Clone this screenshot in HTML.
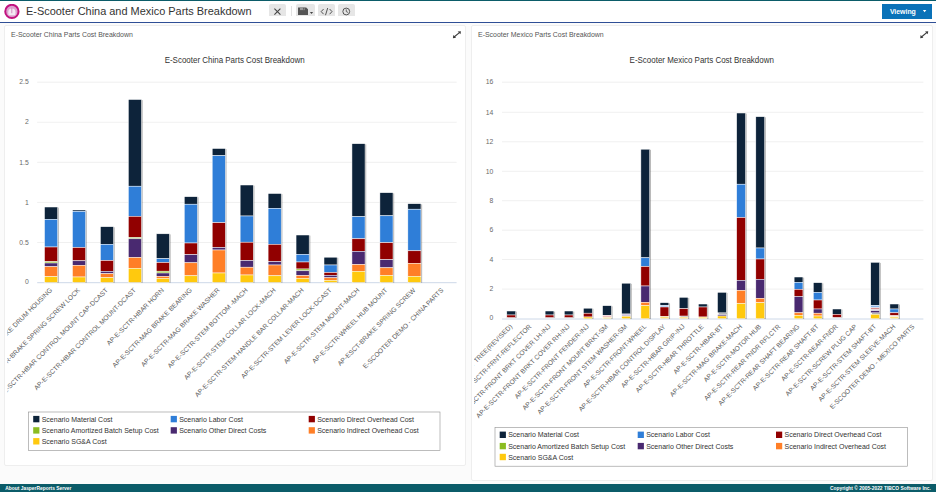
<!DOCTYPE html>
<html lang="en"><head><meta charset="utf-8"><title>E-Scooter China and Mexico Parts Breakdown</title>
<style>
html,body{margin:0;padding:0}
body{width:936px;height:492px;overflow:hidden;position:relative;background:#fbfbfb;font-family:"Liberation Sans", sans-serif;}
.abs{position:absolute}
#topstrip{left:0;top:0;width:936px;height:1px;background:#0b5c69}
#header{left:0;top:1px;width:936px;height:21px;background:#fff}
#hline{left:0;top:21.6px;width:936px;height:1.1px;background:#2f4f96}
#title{left:26px;top:6.4px;font-size:10.95px;letter-spacing:0px;color:#333;white-space:nowrap;line-height:1}
.btn{top:3.5px;height:12.5px;background:#e6e6e6;border-radius:2px 2px 0 0}
#viewing{left:881.5px;top:4.1px;width:50.6px;height:14.9px;background:#0a72b8}
#viewing span{position:absolute;left:8.4px;top:5.0px;font-size:6.9px;letter-spacing:0px;font-weight:bold;color:#fff;line-height:1}
.panel{background:#fff;border:1px solid #eeeeee;border-radius:2px;box-sizing:border-box}
.ptitle{font-size:6.95px;letter-spacing:0px;color:#555;white-space:nowrap;line-height:1;top:32.4px}
#footer{left:0;top:483.7px;width:936px;height:8.3px;background:#0b5c69;color:#fff;font-weight:bold;font-size:4.88px;line-height:1}
#footer span{position:absolute;top:3.0px;white-space:nowrap}
svg text{font-family:"Liberation Sans", sans-serif}
</style></head><body>
<div id="topstrip" class="abs"></div>
<div id="header" class="abs"></div>
<div id="hline" class="abs"></div>
<svg class="abs" style="left:4px;top:4px" width="16" height="16" viewBox="0 0 16 16">
<circle cx="7.9" cy="7.45" r="6.65" fill="#dda2cf" stroke="#c2127f" stroke-width="2"/>
<path d="M4.5 11.3 L4.3 8.2 A3.6 3.6 0 0 1 11.5 8.2 L11.3 11.3 Z" fill="#f3e9f3"/>
<line x1="7.8" y1="9.2" x2="7.8" y2="3.6" stroke="#d781c0" stroke-width="0.9"/>
</svg>
<div id="title" class="abs">E-Scooter China and Mexico Parts Breakdown</div>
<div class="abs btn" style="left:268.8px;width:17.2px"></div>
<div class="abs" style="left:290.6px;top:6px;width:1px;height:10px;background:#e2e2e2"></div>
<div class="abs btn" style="left:296px;width:19.2px"></div>
<div class="abs btn" style="left:317.9px;width:17.1px"></div>
<div class="abs btn" style="left:337.5px;width:17.2px"></div>
<svg class="abs" style="left:260px;top:0" width="100" height="22" viewBox="0 0 100 22">
<g stroke="#444" stroke-width="1.1" fill="none">
<path d="M14.4 8.6 L20.4 14.6 M20.4 8.6 L14.4 14.6"/>
<path d="M63.6 9 L61.2 11.6 L63.6 14.2 M69.6 9 L72 11.6 L69.6 14.2 M67.7 8 L65.5 15.2" stroke-width="0.9"/>
<circle cx="86.25" cy="11.5" r="3.4" stroke-width="0.9"/>
<path d="M86.25 9.4 L86.25 11.6 L88 12.4" stroke-width="0.8"/>
</g>
<path d="M38 7.5 H46.2 L48 9.2 V15 H38 Z" fill="#555"/>
<rect x="40" y="7.5" width="5" height="2.6" fill="#9a9a9a"/>
<rect x="43.2" y="7.9" width="1.2" height="1.8" fill="#555"/>
<path d="M49.9 12.1 H53.1 L51.5 14 Z" fill="#444"/>
</svg>
<div id="viewing" class="abs"><span>Viewing</span>
<svg class="abs" style="left:40px;top:5.4px" width="6" height="5" viewBox="0 0 6 5"><path d="M0.9 1 H4.3 L2.6 3.2 Z" fill="#fff"/></svg></div>
<div class="abs panel" style="left:4px;top:24.9px;width:462px;height:441.1px"></div>
<div class="abs panel" style="left:471.3px;top:24.9px;width:461.4px;height:456.6px"></div>
<div class="abs ptitle" style="left:11px">E-Scooter China Parts Cost Breakdown</div>
<div class="abs ptitle" style="left:478px">E-Scooter Mexico Parts Cost Breakdown</div>
<svg class="abs" style="left:0;top:0" width="936" height="492" viewBox="0 0 936 492">
<defs><filter id="blur" x="-50%" y="-5%" width="200%" height="110%"><feGaussianBlur stdDeviation="0.7"/></filter><clipPath id="cl"><rect x="7.3" y="40" width="460" height="425"/></clipPath><clipPath id="cr"><rect x="474" y="40" width="460" height="440"/></clipPath></defs><line x1="37.2" x2="456.6" y1="242.52" y2="242.52" stroke="#e9e9e9" stroke-width="0.7"/><line x1="37.2" x2="456.6" y1="202.44" y2="202.44" stroke="#e9e9e9" stroke-width="0.7"/><line x1="37.2" x2="456.6" y1="162.36" y2="162.36" stroke="#e9e9e9" stroke-width="0.7"/><line x1="37.2" x2="456.6" y1="122.28" y2="122.28" stroke="#e9e9e9" stroke-width="0.7"/><line x1="37.2" x2="456.6" y1="82.20" y2="82.20" stroke="#e9e9e9" stroke-width="0.7"/><line x1="37.2" x2="456.6" y1="282.7" y2="282.7" stroke="#cdd8e8" stroke-width="1"/><g fill="#000" opacity="0.3" filter="url(#blur)"><rect x="45.70" y="207.60" width="13.10" height="75.10"/><rect x="73.65" y="210.60" width="13.10" height="72.10"/><rect x="101.60" y="227.30" width="13.10" height="55.40"/><rect x="129.55" y="100.10" width="13.10" height="182.60"/><rect x="157.50" y="234.40" width="13.10" height="48.30"/><rect x="185.45" y="197.30" width="13.10" height="85.40"/><rect x="213.40" y="149.10" width="13.10" height="133.60"/><rect x="241.35" y="185.60" width="13.10" height="97.10"/><rect x="269.30" y="194.10" width="13.10" height="88.60"/><rect x="297.25" y="235.60" width="13.10" height="47.10"/><rect x="325.20" y="257.80" width="13.10" height="24.90"/><rect x="353.15" y="144.30" width="13.10" height="138.40"/><rect x="381.10" y="193.30" width="13.10" height="89.40"/><rect x="409.05" y="204.30" width="13.10" height="78.40"/></g><g stroke="#fff" stroke-width="0.5"><rect x="44.50" y="207.00" width="13.10" height="12.30" fill="#0d233a"/><rect x="44.50" y="219.30" width="13.10" height="27.70" fill="#2f7ed8"/><rect x="44.50" y="247.00" width="13.10" height="14.70" fill="#910000"/><rect x="44.50" y="261.70" width="13.10" height="1.30" fill="#8bbc21"/><rect x="44.50" y="263.00" width="13.10" height="3.70" fill="#492970"/><rect x="44.50" y="266.70" width="13.10" height="10.00" fill="#ff7f27"/><rect x="44.50" y="276.70" width="13.10" height="5.70" fill="#ffc90e"/><rect x="72.45" y="210.00" width="13.10" height="1.30" fill="#0d233a"/><rect x="72.45" y="211.30" width="13.10" height="36.20" fill="#2f7ed8"/><rect x="72.45" y="247.50" width="13.10" height="13.30" fill="#910000"/><rect x="72.45" y="260.80" width="13.10" height="4.50" fill="#492970"/><rect x="72.45" y="265.30" width="13.10" height="11.70" fill="#ff7f27"/><rect x="72.45" y="277.00" width="13.10" height="5.40" fill="#ffc90e"/><rect x="100.40" y="226.70" width="13.10" height="17.60" fill="#0d233a"/><rect x="100.40" y="244.30" width="13.10" height="16.20" fill="#2f7ed8"/><rect x="100.40" y="260.50" width="13.10" height="10.80" fill="#910000"/><rect x="100.40" y="271.30" width="13.10" height="2.40" fill="#492970"/><rect x="100.40" y="273.70" width="13.10" height="4.00" fill="#ff7f27"/><rect x="100.40" y="277.70" width="13.10" height="4.70" fill="#ffc90e"/><rect x="128.35" y="99.50" width="13.10" height="86.70" fill="#0d233a"/><rect x="128.35" y="186.20" width="13.10" height="30.10" fill="#2f7ed8"/><rect x="128.35" y="216.30" width="13.10" height="21.20" fill="#910000"/><rect x="128.35" y="237.50" width="13.10" height="1.30" fill="#8bbc21"/><rect x="128.35" y="238.80" width="13.10" height="18.70" fill="#492970"/><rect x="128.35" y="257.50" width="13.10" height="10.80" fill="#ff7f27"/><rect x="128.35" y="268.30" width="13.10" height="14.10" fill="#ffc90e"/><rect x="156.30" y="233.80" width="13.10" height="24.90" fill="#0d233a"/><rect x="156.30" y="258.70" width="13.10" height="3.80" fill="#2f7ed8"/><rect x="156.30" y="262.50" width="13.10" height="8.70" fill="#910000"/><rect x="156.30" y="271.20" width="13.10" height="1.80" fill="#8bbc21"/><rect x="156.30" y="273.00" width="13.10" height="3.30" fill="#492970"/><rect x="156.30" y="276.30" width="13.10" height="2.00" fill="#ff7f27"/><rect x="156.30" y="278.30" width="13.10" height="4.10" fill="#ffc90e"/><rect x="184.25" y="196.70" width="13.10" height="7.50" fill="#0d233a"/><rect x="184.25" y="204.20" width="13.10" height="38.80" fill="#2f7ed8"/><rect x="184.25" y="243.00" width="13.10" height="11.70" fill="#910000"/><rect x="184.25" y="254.70" width="13.10" height="8.10" fill="#492970"/><rect x="184.25" y="262.80" width="13.10" height="13.00" fill="#ff7f27"/><rect x="184.25" y="275.80" width="13.10" height="6.60" fill="#ffc90e"/><rect x="212.20" y="148.50" width="13.10" height="7.20" fill="#0d233a"/><rect x="212.20" y="155.70" width="13.10" height="67.00" fill="#2f7ed8"/><rect x="212.20" y="222.70" width="13.10" height="24.80" fill="#910000"/><rect x="212.20" y="247.50" width="13.10" height="2.50" fill="#492970"/><rect x="212.20" y="250.00" width="13.10" height="23.00" fill="#ff7f27"/><rect x="212.20" y="273.00" width="13.10" height="9.40" fill="#ffc90e"/><rect x="240.15" y="185.00" width="13.10" height="31.00" fill="#0d233a"/><rect x="240.15" y="216.00" width="13.10" height="26.20" fill="#2f7ed8"/><rect x="240.15" y="242.20" width="13.10" height="18.30" fill="#910000"/><rect x="240.15" y="260.50" width="13.10" height="6.70" fill="#492970"/><rect x="240.15" y="267.20" width="13.10" height="7.80" fill="#ff7f27"/><rect x="240.15" y="275.00" width="13.10" height="7.40" fill="#ffc90e"/><rect x="268.10" y="193.50" width="13.10" height="14.80" fill="#0d233a"/><rect x="268.10" y="208.30" width="13.10" height="36.00" fill="#2f7ed8"/><rect x="268.10" y="244.30" width="13.10" height="17.40" fill="#910000"/><rect x="268.10" y="261.70" width="13.10" height="3.30" fill="#492970"/><rect x="268.10" y="265.00" width="13.10" height="10.80" fill="#ff7f27"/><rect x="268.10" y="275.80" width="13.10" height="6.60" fill="#ffc90e"/><rect x="296.05" y="235.00" width="13.10" height="19.30" fill="#0d233a"/><rect x="296.05" y="254.30" width="13.10" height="7.70" fill="#2f7ed8"/><rect x="296.05" y="262.00" width="13.10" height="7.00" fill="#910000"/><rect x="296.05" y="269.00" width="13.10" height="1.80" fill="#8bbc21"/><rect x="296.05" y="270.80" width="13.10" height="4.70" fill="#492970"/><rect x="296.05" y="275.50" width="13.10" height="2.80" fill="#ff7f27"/><rect x="296.05" y="278.30" width="13.10" height="4.10" fill="#ffc90e"/><rect x="324.00" y="257.20" width="13.10" height="7.80" fill="#0d233a"/><rect x="324.00" y="265.00" width="13.10" height="7.50" fill="#2f7ed8"/><rect x="324.00" y="272.50" width="13.10" height="2.80" fill="#910000"/><rect x="324.00" y="275.30" width="13.10" height="2.50" fill="#492970"/><rect x="324.00" y="277.80" width="13.10" height="2.50" fill="#ff7f27"/><rect x="324.00" y="280.30" width="13.10" height="2.10" fill="#ffc90e"/><rect x="351.95" y="143.70" width="13.10" height="73.00" fill="#0d233a"/><rect x="351.95" y="216.70" width="13.10" height="22.10" fill="#2f7ed8"/><rect x="351.95" y="238.80" width="13.10" height="12.50" fill="#910000"/><rect x="351.95" y="251.30" width="13.10" height="13.20" fill="#492970"/><rect x="351.95" y="264.50" width="13.10" height="6.80" fill="#ff7f27"/><rect x="351.95" y="271.30" width="13.10" height="11.10" fill="#ffc90e"/><rect x="379.90" y="192.70" width="13.10" height="23.10" fill="#0d233a"/><rect x="379.90" y="215.80" width="13.10" height="26.90" fill="#2f7ed8"/><rect x="379.90" y="242.70" width="13.10" height="17.00" fill="#910000"/><rect x="379.90" y="259.70" width="13.10" height="8.10" fill="#492970"/><rect x="379.90" y="267.80" width="13.10" height="7.70" fill="#ff7f27"/><rect x="379.90" y="275.50" width="13.10" height="6.90" fill="#ffc90e"/><rect x="407.85" y="203.70" width="13.10" height="5.50" fill="#0d233a"/><rect x="407.85" y="209.20" width="13.10" height="41.60" fill="#2f7ed8"/><rect x="407.85" y="250.80" width="13.10" height="12.50" fill="#910000"/><rect x="407.85" y="263.30" width="13.10" height="13.00" fill="#ff7f27"/><rect x="407.85" y="276.30" width="13.10" height="6.10" fill="#ffc90e"/></g><text x="28.8" y="283.60" text-anchor="end" font-size="6.8" fill="#6a6a6a">0</text><text x="28.8" y="244.72" text-anchor="end" font-size="6.8" fill="#6a6a6a">0.5</text><text x="28.8" y="204.64" text-anchor="end" font-size="6.8" fill="#6a6a6a">1</text><text x="28.8" y="164.56" text-anchor="end" font-size="6.8" fill="#6a6a6a">1.5</text><text x="28.8" y="124.48" text-anchor="end" font-size="6.8" fill="#6a6a6a">2</text><text x="28.8" y="84.40" text-anchor="end" font-size="6.8" fill="#6a6a6a">2.5</text><g clip-path="url(#cl)"><text transform="translate(52.55 290.70) rotate(-45)" text-anchor="end" font-size="6.65" letter-spacing="0" fill="#5c5c5c">AP-E-SCTR-BRAKE DRUM HOUSING</text><text transform="translate(80.50 290.70) rotate(-45)" text-anchor="end" font-size="6.65" letter-spacing="0" fill="#5c5c5c">AP-E-SCTR-BRAKE SPRING SCREW LOCK</text><text transform="translate(108.45 290.70) rotate(-45)" text-anchor="end" font-size="6.65" letter-spacing="0" fill="#5c5c5c">AP-E-SCTR-HBAR CONTROL MOUNT CAP-DCAST</text><text transform="translate(136.40 290.70) rotate(-45)" text-anchor="end" font-size="6.65" letter-spacing="0" fill="#5c5c5c">AP-E-SCTR-HBAR CONTROL MOUNT-DCAST</text><text transform="translate(164.35 290.70) rotate(-45)" text-anchor="end" font-size="6.65" letter-spacing="0" fill="#5c5c5c">AP-E-SCTR-HBAR HORN</text><text transform="translate(192.30 290.70) rotate(-45)" text-anchor="end" font-size="6.65" letter-spacing="0" fill="#5c5c5c">AP-E-SCTR-MAG BRAKE BEARING</text><text transform="translate(220.25 290.70) rotate(-45)" text-anchor="end" font-size="6.65" letter-spacing="0" fill="#5c5c5c">AP-E-SCTR-MAG BRAKE WASHER</text><text transform="translate(248.20 290.70) rotate(-45)" text-anchor="end" font-size="6.65" letter-spacing="0" fill="#5c5c5c">AP-E-SCTR-STEM BOTTOM -MACH</text><text transform="translate(276.15 290.70) rotate(-45)" text-anchor="end" font-size="6.65" letter-spacing="0" fill="#5c5c5c">AP-E-SCTR-STEM COLLAR LOCK-MACH</text><text transform="translate(304.10 290.70) rotate(-45)" text-anchor="end" font-size="6.65" letter-spacing="0" fill="#5c5c5c">AP-E-SCTR-STEM HANDLE BAR COLLAR-MACH</text><text transform="translate(332.05 290.70) rotate(-45)" text-anchor="end" font-size="6.65" letter-spacing="0" fill="#5c5c5c">AP-E-SCTR-STEM LEVER LOCK-DCAST</text><text transform="translate(360.00 290.70) rotate(-45)" text-anchor="end" font-size="6.65" letter-spacing="0" fill="#5c5c5c">AP-E-SCTR-STEM MOUNT-MACH</text><text transform="translate(387.95 290.70) rotate(-45)" text-anchor="end" font-size="6.65" letter-spacing="0" fill="#5c5c5c">AP-E-SCTR-WHEEL HUB MOUNT</text><text transform="translate(415.90 290.70) rotate(-45)" text-anchor="end" font-size="6.65" letter-spacing="0" fill="#5c5c5c">AP-ESCT-BRAKE SPRING SCREW</text><text transform="translate(443.85 290.70) rotate(-45)" text-anchor="end" font-size="6.65" letter-spacing="0" fill="#5c5c5c">E-SCOOTER DEMO - CHINA PARTS</text></g><text transform="translate(234.6 63.2) scale(0.9280 1)" text-anchor="middle" font-size="8.6" fill="#333">E-Scooter China Parts Cost Breakdown</text><rect x="28.5" y="412" width="411.5" height="38.5" fill="#fff" stroke="#909090" stroke-width="0.6"/><rect x="33.2" y="415.90" width="6.2" height="6.4" fill="#0d233a"/><text x="41.7" y="421.70" font-size="7" letter-spacing="0" fill="#333">Scenario Material Cost</text><rect x="170.7" y="415.90" width="6.2" height="6.4" fill="#2f7ed8"/><text x="179.2" y="421.70" font-size="7" letter-spacing="0" fill="#333">Scenario Labor Cost</text><rect x="308.7" y="415.90" width="6.2" height="6.4" fill="#910000"/><text x="317.2" y="421.70" font-size="7" letter-spacing="0" fill="#333">Scenario Direct Overhead Cost</text><rect x="33.2" y="427.20" width="6.2" height="6.4" fill="#8bbc21"/><text x="41.7" y="433.00" font-size="7" letter-spacing="0" fill="#333">Scenario Amortized Batch Setup Cost</text><rect x="170.7" y="427.20" width="6.2" height="6.4" fill="#492970"/><text x="179.2" y="433.00" font-size="7" letter-spacing="0" fill="#333">Scenario Other Direct Costs</text><rect x="308.7" y="427.20" width="6.2" height="6.4" fill="#ff7f27"/><text x="317.2" y="433.00" font-size="7" letter-spacing="0" fill="#333">Scenario Indirect Overhead Cost</text><rect x="33.2" y="438.10" width="6.2" height="6.4" fill="#ffc90e"/><text x="41.7" y="443.90" font-size="7" letter-spacing="0" fill="#333">Scenario SG&amp;A Cost</text><line x1="502" x2="923.4" y1="289.10" y2="289.10" stroke="#e9e9e9" stroke-width="0.7"/><line x1="502" x2="923.4" y1="259.50" y2="259.50" stroke="#e9e9e9" stroke-width="0.7"/><line x1="502" x2="923.4" y1="230.20" y2="230.20" stroke="#e9e9e9" stroke-width="0.7"/><line x1="502" x2="923.4" y1="200.70" y2="200.70" stroke="#e9e9e9" stroke-width="0.7"/><line x1="502" x2="923.4" y1="171.30" y2="171.30" stroke="#e9e9e9" stroke-width="0.7"/><line x1="502" x2="923.4" y1="141.80" y2="141.80" stroke="#e9e9e9" stroke-width="0.7"/><line x1="502" x2="923.4" y1="112.30" y2="112.30" stroke="#e9e9e9" stroke-width="0.7"/><line x1="502" x2="923.4" y1="82.20" y2="82.20" stroke="#e9e9e9" stroke-width="0.7"/><line x1="502" x2="923.4" y1="319.0" y2="319.0" stroke="#cdd8e8" stroke-width="1"/><g fill="#000" opacity="0.3" filter="url(#blur)"><rect x="508.00" y="311.60" width="8.80" height="6.20"/><rect x="546.31" y="311.60" width="8.80" height="6.20"/><rect x="565.47" y="311.60" width="8.80" height="6.20"/><rect x="584.62" y="308.80" width="8.80" height="10.20"/><rect x="603.78" y="306.30" width="8.80" height="12.70"/><rect x="622.93" y="283.80" width="8.80" height="35.20"/><rect x="642.09" y="149.80" width="8.80" height="169.20"/><rect x="661.24" y="303.30" width="8.80" height="15.70"/><rect x="680.40" y="297.90" width="8.80" height="21.10"/><rect x="699.55" y="304.60" width="8.80" height="14.40"/><rect x="718.71" y="292.90" width="8.80" height="26.10"/><rect x="737.86" y="113.60" width="8.80" height="205.40"/><rect x="757.02" y="117.30" width="8.80" height="201.70"/><rect x="795.33" y="277.60" width="8.80" height="41.40"/><rect x="814.48" y="283.30" width="8.80" height="35.70"/><rect x="833.64" y="309.60" width="8.80" height="8.00"/><rect x="871.95" y="262.90" width="8.80" height="56.10"/><rect x="891.10" y="304.60" width="8.80" height="14.40"/></g><g stroke="#fff" stroke-width="0.5"><rect x="506.80" y="311.00" width="8.80" height="4.00" fill="#0d233a"/><rect x="506.80" y="315.00" width="8.80" height="2.50" fill="#910000"/><rect x="545.11" y="311.00" width="8.80" height="4.00" fill="#0d233a"/><rect x="545.11" y="315.00" width="8.80" height="2.50" fill="#910000"/><rect x="564.26" y="311.00" width="8.80" height="4.00" fill="#0d233a"/><rect x="564.26" y="315.00" width="8.80" height="2.50" fill="#910000"/><rect x="583.42" y="308.20" width="8.80" height="5.00" fill="#0d233a"/><rect x="583.42" y="313.20" width="8.80" height="3.80" fill="#910000"/><rect x="583.42" y="317.00" width="8.80" height="1.70" fill="#ffc90e"/><rect x="602.58" y="305.70" width="8.80" height="9.60" fill="#0d233a"/><rect x="602.58" y="315.30" width="8.80" height="2.00" fill="#f3c0c0"/><rect x="602.58" y="317.30" width="8.80" height="1.40" fill="#ffe07a"/><rect x="621.73" y="283.20" width="8.80" height="30.80" fill="#0d233a"/><rect x="621.73" y="314.00" width="8.80" height="2.20" fill="#c9bddb"/><rect x="621.73" y="316.20" width="8.80" height="2.50" fill="#ffc90e"/><rect x="640.88" y="149.20" width="8.80" height="108.60" fill="#0d233a"/><rect x="640.88" y="257.80" width="8.80" height="8.70" fill="#2f7ed8"/><rect x="640.88" y="266.50" width="8.80" height="19.50" fill="#910000"/><rect x="640.88" y="286.00" width="8.80" height="16.30" fill="#492970"/><rect x="640.88" y="302.30" width="8.80" height="3.40" fill="#ff7f27"/><rect x="640.88" y="305.70" width="8.80" height="13.00" fill="#ffc90e"/><rect x="660.04" y="302.70" width="8.80" height="2.60" fill="#0d233a"/><rect x="660.04" y="305.30" width="8.80" height="1.70" fill="#8db7ea"/><rect x="660.04" y="307.00" width="8.80" height="9.50" fill="#910000"/><rect x="660.04" y="316.50" width="8.80" height="2.20" fill="#ffe07a"/><rect x="679.20" y="297.30" width="8.80" height="11.40" fill="#0d233a"/><rect x="679.20" y="308.70" width="8.80" height="7.30" fill="#910000"/><rect x="679.20" y="317.00" width="8.80" height="1.70" fill="#ffe07a"/><rect x="698.35" y="304.00" width="8.80" height="3.00" fill="#0d233a"/><rect x="698.35" y="307.00" width="8.80" height="10.00" fill="#910000"/><rect x="698.35" y="317.00" width="8.80" height="1.70" fill="#ffe07a"/><rect x="717.50" y="292.30" width="8.80" height="20.50" fill="#0d233a"/><rect x="717.50" y="314.70" width="8.80" height="1.30" fill="#492970"/><rect x="717.50" y="316.00" width="8.80" height="2.70" fill="#ffc90e"/><rect x="736.66" y="113.00" width="8.80" height="71.20" fill="#0d233a"/><rect x="736.66" y="184.20" width="8.80" height="33.30" fill="#2f7ed8"/><rect x="736.66" y="217.50" width="8.80" height="62.80" fill="#910000"/><rect x="736.66" y="280.30" width="8.80" height="10.00" fill="#492970"/><rect x="736.66" y="290.30" width="8.80" height="13.20" fill="#ff7f27"/><rect x="736.66" y="303.50" width="8.80" height="15.20" fill="#ffc90e"/><rect x="755.82" y="116.70" width="8.80" height="131.30" fill="#0d233a"/><rect x="755.82" y="248.00" width="8.80" height="11.00" fill="#2f7ed8"/><rect x="755.82" y="259.00" width="8.80" height="20.30" fill="#910000"/><rect x="755.82" y="279.30" width="8.80" height="19.00" fill="#492970"/><rect x="755.82" y="298.30" width="8.80" height="4.40" fill="#ff7f27"/><rect x="755.82" y="302.70" width="8.80" height="16.00" fill="#ffc90e"/><rect x="794.13" y="277.00" width="8.80" height="5.30" fill="#0d233a"/><rect x="794.13" y="282.30" width="8.80" height="7.00" fill="#2f7ed8"/><rect x="794.13" y="289.30" width="8.80" height="7.20" fill="#910000"/><rect x="794.13" y="296.50" width="8.80" height="16.30" fill="#492970"/><rect x="794.13" y="312.80" width="8.80" height="2.50" fill="#ff7f27"/><rect x="794.13" y="315.30" width="8.80" height="3.40" fill="#ffc90e"/><rect x="813.28" y="282.70" width="8.80" height="9.60" fill="#0d233a"/><rect x="813.28" y="292.30" width="8.80" height="7.70" fill="#2f7ed8"/><rect x="813.28" y="300.00" width="8.80" height="9.00" fill="#910000"/><rect x="813.28" y="309.00" width="8.80" height="4.20" fill="#492970"/><rect x="813.28" y="313.20" width="8.80" height="2.80" fill="#ff7f27"/><rect x="813.28" y="316.00" width="8.80" height="2.70" fill="#ffc90e"/><rect x="832.44" y="309.00" width="8.80" height="5.30" fill="#0d233a"/><rect x="832.44" y="314.30" width="8.80" height="3.00" fill="#910000"/><rect x="870.75" y="262.30" width="8.80" height="43.00" fill="#0d233a"/><rect x="870.75" y="305.30" width="8.80" height="2.50" fill="#8db7ea"/><rect x="870.75" y="307.80" width="8.80" height="2.00" fill="#d98a8a"/><rect x="870.75" y="309.80" width="8.80" height="0.90" fill="#c9bddb"/><rect x="870.75" y="310.70" width="8.80" height="2.10" fill="#492970"/><rect x="870.75" y="314.30" width="8.80" height="4.40" fill="#ffc90e"/><rect x="889.90" y="304.00" width="8.80" height="5.00" fill="#0d233a"/><rect x="889.90" y="309.00" width="8.80" height="3.80" fill="#2f7ed8"/><rect x="889.90" y="312.80" width="8.80" height="2.90" fill="#910000"/><rect x="889.90" y="315.70" width="8.80" height="1.00" fill="#ffc79a"/><rect x="889.90" y="316.70" width="8.80" height="2.00" fill="#ffe07a"/></g><text x="493.4" y="320.10" text-anchor="end" font-size="6.8" fill="#6a6a6a">0</text><text x="493.4" y="291.30" text-anchor="end" font-size="6.8" fill="#6a6a6a">2</text><text x="493.4" y="261.70" text-anchor="end" font-size="6.8" fill="#6a6a6a">4</text><text x="493.4" y="232.40" text-anchor="end" font-size="6.8" fill="#6a6a6a">6</text><text x="493.4" y="202.90" text-anchor="end" font-size="6.8" fill="#6a6a6a">8</text><text x="493.4" y="173.50" text-anchor="end" font-size="6.8" fill="#6a6a6a">10</text><text x="493.4" y="144.00" text-anchor="end" font-size="6.8" fill="#6a6a6a">12</text><text x="493.4" y="114.50" text-anchor="end" font-size="6.8" fill="#6a6a6a">14</text><text x="493.4" y="84.40" text-anchor="end" font-size="6.8" fill="#6a6a6a">16</text><g clip-path="url(#cr)"><text transform="translate(512.70 327.00) rotate(-45)" text-anchor="end" font-size="6.65" letter-spacing="0" fill="#5c5c5c">AP-E-SCTR-ASSY TREE(REVISED)</text><text transform="translate(531.86 327.00) rotate(-45)" text-anchor="end" font-size="6.65" letter-spacing="0" fill="#5c5c5c">AP-E-SCTR-FRNT-REFLECTOR</text><text transform="translate(551.01 327.00) rotate(-45)" text-anchor="end" font-size="6.65" letter-spacing="0" fill="#5c5c5c">AP-E-SCTR-FRONT BRKT COVER LH-INJ</text><text transform="translate(570.16 327.00) rotate(-45)" text-anchor="end" font-size="6.65" letter-spacing="0" fill="#5c5c5c">AP-E-SCTR-FRONT BRKT COVER RH-INJ</text><text transform="translate(589.32 327.00) rotate(-45)" text-anchor="end" font-size="6.65" letter-spacing="0" fill="#5c5c5c">AP-E-SCTR-FRONT FENDER-INJ</text><text transform="translate(608.48 327.00) rotate(-45)" text-anchor="end" font-size="6.65" letter-spacing="0" fill="#5c5c5c">AP-E-SCTR-FRONT MOUNT BRKT-SM</text><text transform="translate(627.63 327.00) rotate(-45)" text-anchor="end" font-size="6.65" letter-spacing="0" fill="#5c5c5c">AP-E-SCTR-FRONT STEM WASHER-SM</text><text transform="translate(646.78 327.00) rotate(-45)" text-anchor="end" font-size="6.65" letter-spacing="0" fill="#5c5c5c">AP-E-SCTR-FRONT-WHEEL</text><text transform="translate(665.94 327.00) rotate(-45)" text-anchor="end" font-size="6.65" letter-spacing="0" fill="#5c5c5c">AP-E-SCTR-HBAR CONTROL DISPLAY</text><text transform="translate(685.10 327.00) rotate(-45)" text-anchor="end" font-size="6.65" letter-spacing="0" fill="#5c5c5c">AP-E-SCTR-HBAR GRIP-INJ</text><text transform="translate(704.25 327.00) rotate(-45)" text-anchor="end" font-size="6.65" letter-spacing="0" fill="#5c5c5c">AP-E-SCTR-HBAR THROTTLE</text><text transform="translate(723.40 327.00) rotate(-45)" text-anchor="end" font-size="6.65" letter-spacing="0" fill="#5c5c5c">AP-E-SCTR-HBAR-BT</text><text transform="translate(742.56 327.00) rotate(-45)" text-anchor="end" font-size="6.65" letter-spacing="0" fill="#5c5c5c">AP-E-SCTR-MAG BRAKE-MACH</text><text transform="translate(761.72 327.00) rotate(-45)" text-anchor="end" font-size="6.65" letter-spacing="0" fill="#5c5c5c">AP-E-SCTR-MOTOR HUB</text><text transform="translate(780.87 327.00) rotate(-45)" text-anchor="end" font-size="6.65" letter-spacing="0" fill="#5c5c5c">AP-E-SCTR-REAR FNDR RFLCTR</text><text transform="translate(800.03 327.00) rotate(-45)" text-anchor="end" font-size="6.65" letter-spacing="0" fill="#5c5c5c">AP-E-SCTR-REAR SHAFT BEARING</text><text transform="translate(819.18 327.00) rotate(-45)" text-anchor="end" font-size="6.65" letter-spacing="0" fill="#5c5c5c">AP-E-SCTR-REAR SHAFT-BT</text><text transform="translate(838.34 327.00) rotate(-45)" text-anchor="end" font-size="6.65" letter-spacing="0" fill="#5c5c5c">AP-E-SCTR-REAR-FNDR</text><text transform="translate(857.49 327.00) rotate(-45)" text-anchor="end" font-size="6.65" letter-spacing="0" fill="#5c5c5c">AP-E-SCTR-SCREW PLUG CAP</text><text transform="translate(876.64 327.00) rotate(-45)" text-anchor="end" font-size="6.65" letter-spacing="0" fill="#5c5c5c">AP-E-SCTR-STEM SHAFT-BT</text><text transform="translate(895.80 327.00) rotate(-45)" text-anchor="end" font-size="6.65" letter-spacing="0" fill="#5c5c5c">AP-E-SCTR-STEM SLEEVE-MACH</text><text transform="translate(914.95 327.00) rotate(-45)" text-anchor="end" font-size="6.65" letter-spacing="0" fill="#5c5c5c">E-SCOOTER DEMO - MEXICO PARTS</text></g><text transform="translate(701.7 63.2) scale(0.9266 1)" text-anchor="middle" font-size="8.6" fill="#333">E-Scooter Mexico Parts Cost Breakdown</text><rect x="495" y="427.5" width="412.5" height="38.7" fill="#fff" stroke="#909090" stroke-width="0.6"/><rect x="499.7" y="431.60" width="6.2" height="6.4" fill="#0d233a"/><text x="508.2" y="437.40" font-size="7" letter-spacing="0" fill="#333">Scenario Material Cost</text><rect x="637.7" y="431.60" width="6.2" height="6.4" fill="#2f7ed8"/><text x="646.2" y="437.40" font-size="7" letter-spacing="0" fill="#333">Scenario Labor Cost</text><rect x="776.0" y="431.60" width="6.2" height="6.4" fill="#910000"/><text x="784.5" y="437.40" font-size="7" letter-spacing="0" fill="#333">Scenario Direct Overhead Cost</text><rect x="499.7" y="442.90" width="6.2" height="6.4" fill="#8bbc21"/><text x="508.2" y="448.70" font-size="7" letter-spacing="0" fill="#333">Scenario Amortized Batch Setup Cost</text><rect x="637.7" y="442.90" width="6.2" height="6.4" fill="#492970"/><text x="646.2" y="448.70" font-size="7" letter-spacing="0" fill="#333">Scenario Other Direct Costs</text><rect x="776.0" y="442.90" width="6.2" height="6.4" fill="#ff7f27"/><text x="784.5" y="448.70" font-size="7" letter-spacing="0" fill="#333">Scenario Indirect Overhead Cost</text><rect x="499.7" y="453.80" width="6.2" height="6.4" fill="#ffc90e"/><text x="508.2" y="459.60" font-size="7" letter-spacing="0" fill="#333">Scenario SG&amp;A Cost</text><g transform="translate(452.9 31.2)" stroke="#3a3a3a" stroke-width="1.1" fill="#3a3a3a"><line x1="1.2" y1="5.8" x2="6.8" y2="1.2"/><path d="M0 7 L0.4 3.9 L3.2 6.6 Z" stroke="none"/><path d="M8 0 L7.6 3.1 L4.8 0.4 Z" stroke="none"/></g><g transform="translate(920.2 31.2)" stroke="#3a3a3a" stroke-width="1.1" fill="#3a3a3a"><line x1="1.2" y1="5.8" x2="6.8" y2="1.2"/><path d="M0 7 L0.4 3.9 L3.2 6.6 Z" stroke="none"/><path d="M8 0 L7.6 3.1 L4.8 0.4 Z" stroke="none"/></g>
</svg>
<div id="footer" class="abs"><span style="left:5.3px;letter-spacing:0px">About JasperReports Server</span><span style="right:5.2px;letter-spacing:0px">Copyright © 2005-2022 TIBCO Software Inc.</span></div>
</body></html>
